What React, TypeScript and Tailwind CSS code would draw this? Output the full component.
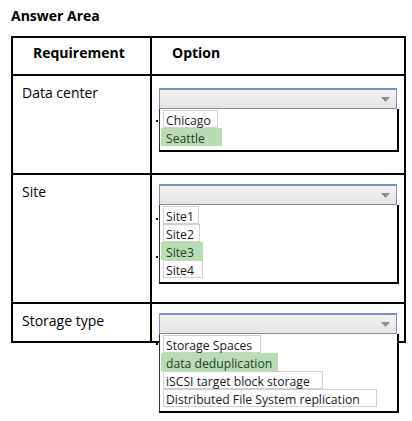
import React from "react";

type Opt = { label: string; width: number; selected?: boolean };

const rows: {
  label: string;
  height: string;
  pad: string;
  dots: number[];
  options: Opt[];
}[] = [
  {
    label: "Data center",
    height: "h-[99px]",
    pad: "pt-[12px]",
    dots: [32],
    options: [
      { label: "Chicago", width: 55 },
      { label: "Seattle", width: 61, selected: true },
    ],
  },
  {
    label: "Site",
    height: "h-[129px]",
    pad: "pt-[9px]",
    dots: [34, 72],
    options: [
      { label: "Site1", width: 36 },
      { label: "Site2", width: 37 },
      { label: "Site3", width: 42, selected: true },
      { label: "Site4", width: 40 },
    ],
  },
  {
    label: "Storage type",
    height: "h-[37px]",
    pad: "pt-[9px]",
    dots: [30],
    options: [
      { label: "Storage Spaces", width: 98 },
      { label: "data deduplication", width: 117, selected: true },
      { label: "iSCSI target block storage", width: 160 },
      { label: "Distributed File System replication", width: 214 },
    ],
  },
];

function Dropdown({ options, dots }: { options: Opt[]; dots: number[] }) {
  return (
    <div className="relative ml-[7px] w-[240px]">
      {dots.map((d) => (
        <span
          key={d}
          className="absolute left-[-3px] w-[2px] h-[2px] bg-black"
          style={{ top: d }}
        />
      ))}
      <div className="flex items-center justify-end h-[21px] w-[238px] border-t-2 border-l border-r border-[#7d93bf] border-b border-b-[#8a8a8a] bg-gradient-to-b from-[#f3f3f3] to-[#e4e4e4] pr-[6px]">
        <svg width="9" height="5" viewBox="0 0 9 5">
          <path d="M0 0 H9 L4.5 5 Z" fill="#8c8c8c" />
        </svg>
      </div>
      <div className="relative z-10 w-[240px] bg-white border-l border-[#333] border-r-2 border-r-black border-b-2 border-b-black pt-[1px] pb-[4px]">
        {options.map((o) => (
          <div
            key={o.label}
            className={
              o.selected
                ? "ml-[1px] h-[18px] border border-[#b9ddb2] bg-[#b9ddb2] pl-[4px] text-[#213f21] leading-[16px]"
                : "ml-[3px] h-[18px] border border-[#cfcfcf] pl-[2px] text-[#1a1a1a] leading-[16px]"
            }
            style={{ width: o.width }}
          >
            <span className="text-[12.2px] whitespace-nowrap">{o.label}</span>
          </div>
        ))}
      </div>
    </div>
  );
}

export default function App() {
  return (
    <div className="w-[412px] h-[421px] bg-white overflow-hidden font-['Open_Sans',sans-serif] text-black">
      <h1 className="pl-[11px] pt-[6px] h-[36px] text-[14px] leading-[20px] font-bold">
        Answer Area
      </h1>
      <div className="ml-[11px] w-[395px] border-2 border-black">
        <div className="flex h-[38px] border-b-2 border-black text-[14px] leading-[20px] font-bold">
          <div className="w-[139px] border-r-2 border-black pl-[20px] pt-[5px]">
            Requirement
          </div>
          <div className="flex-1 pl-[20px] pt-[5px]">Option</div>
        </div>
        {rows.map((r, i) => (
          <div
            key={r.label}
            className={`flex ${r.height} ${
              i < rows.length - 1 ? "border-b-2 border-black" : ""
            }`}
          >
            <div className="w-[139px] shrink-0 border-r-2 border-black pl-[9px] pt-[7px] text-[14px] leading-[20px]">
              {r.label}
            </div>
            <div className={`flex-1 ${r.pad}`}>
              <Dropdown options={r.options} dots={r.dots} />
            </div>
          </div>
        ))}
      </div>
    </div>
  );
}
